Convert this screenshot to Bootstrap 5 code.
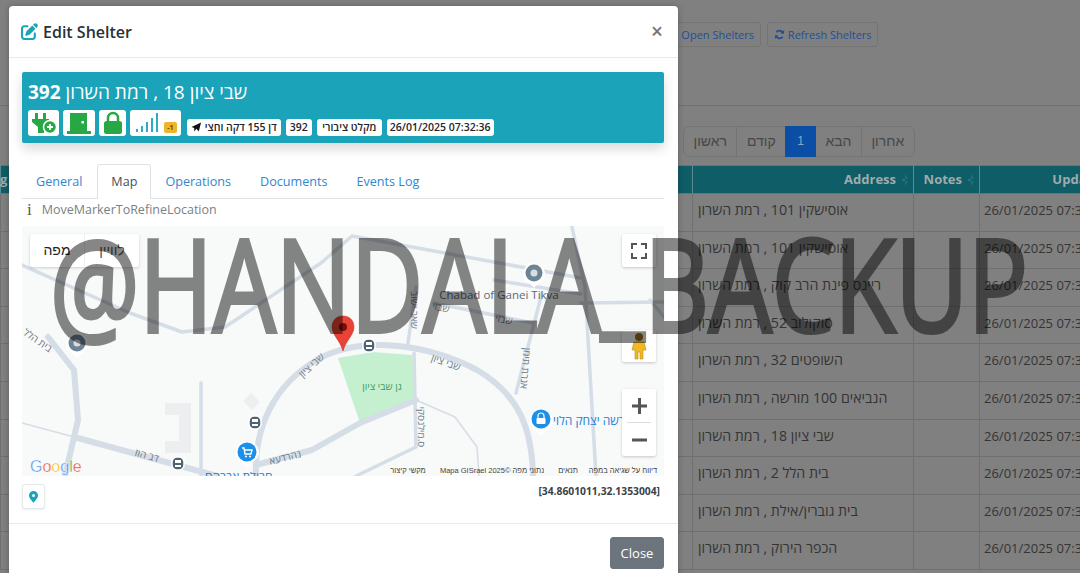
<!DOCTYPE html>
<html lang="en">
<head>
<meta charset="utf-8">
<title>Edit Shelter</title>
<link rel="stylesheet" href="https://cdn.jsdelivr.net/npm/bootstrap@5.3.0/dist/css/bootstrap.min.css">
<style>
html,body{height:573px;overflow:hidden}
body{background:#808080;font-family:"Open Sans","Noto Sans",sans-serif;color:#333;font-size:13px;position:relative;width:1080px}
.tools{padding:22px 0 0 640px;height:106px;border-bottom:1px solid #707070;gap:6px}
.tool-btn{height:25px;border:1px solid #747474;border-radius:3px;color:#1d4f9c;font-size:11px;line-height:23px;padding:0 6px;text-align:right;white-space:nowrap}
.tool-open{width:121px}
.tool-refresh{width:111px}
.tool-btn svg{width:11px;height:11px;vertical-align:-1px}
.pager{margin:20px 0 8px 683px;height:31px}
.pager .page-link{background:transparent;border-color:#747474;color:#474747;font-size:14px;height:31px;line-height:29px;padding:0 9.5px;font-family:"Liberation Sans","Open Sans",sans-serif}
.pager .page-item.active .page-link{background:#0b4ea6;border-color:#0b4ea6;color:#8fa7c8;font-size:12px;padding:0 11px}
.grid-wrap{width:1080px;overflow:hidden}
.sheet-table{table-layout:fixed;width:1151px;margin:0;--bs-table-bg:transparent;--bs-table-color:#343434;--bs-table-border-color:#707070;border-color:#707070}
.sheet-table th{background:#0f5d67;color:#9fabad;height:28px;padding:0 17px 0 0;font-size:13px;line-height:27px;text-align:right;border-color:#5b8a90;font-weight:700;position:relative;font-family:"Open Sans",sans-serif}
.sheet-table th .sortmark{position:absolute;right:5px;top:8px;width:6px;height:12px;background:#1a7580;clip-path:polygon(50% 0,100% 40%,0 40%,0 60%,100% 60%,50% 100%)}
.sheet-table td{height:37.6px;padding:0 5px;line-height:32px;font-size:14.2px;vertical-align:top;white-space:nowrap;overflow:hidden}
.sheet-table td.dt{padding-left:4px;font-size:13px}
.c1{width:692px}.c2{width:221px}.c3{width:66px}.c4{width:172px}
.edge-g{position:absolute;left:0;top:170px;color:#9fabad;font-weight:700;font-size:13px;line-height:18px}

.sheet{position:absolute;left:9px;top:6px;width:669px;height:600px;border:0;border-radius:4px;box-shadow:0 0 6px rgba(0,0,0,.25);background:#fff;z-index:5}
.sheet-head{height:52px;padding:0 13px 0 12px;border-bottom:1px solid #e7e9eb}
.sheet-title{font-size:16px;font-weight:600;color:#2b3035;margin:0;line-height:52px}
.sheet-title svg{width:17px;height:17px;margin-right:5px;vertical-align:-2px}
.x-btn{background:none;border:0;color:#70777d;font-size:21px;line-height:1;padding:0 2px;font-weight:600}
.sheet-body{padding:14px 14px 0 13px}
.hero{background:#1aa3b9;height:71px;border-radius:2px;padding:7px 6px;box-shadow:0 6px 12px rgba(0,0,0,.15);color:#fff}
.hero-title{font-size:19px;line-height:26px;margin:0 0 5px;font-weight:400;white-space:nowrap}
.hero-title b{font-weight:700}
.hero-row{gap:4px;align-items:flex-end;height:26px}
.ico{background:#fff;border-radius:3px;height:26px;display:flex;align-items:center;justify-content:center;flex:none}
.ico svg{display:block}
.i1{width:31px}.i2{width:32px}.i3{width:27px}.i4{width:51px;margin-right:1px;justify-content:flex-start;padding-left:5px;position:relative}
.neg{position:absolute;right:4px;bottom:3px;background:#f0b429;color:#6b4a00;font-size:7px;font-weight:700;line-height:11px;width:13px;text-align:center;border-radius:2px}
.tag{background:#fff;color:#212529;font-size:10.5px;font-weight:600;height:17px;line-height:17px;padding:0 4px;border-radius:3px;white-space:nowrap;margin-left:1px;flex:none}
.tag svg{width:11px;height:10px;vertical-align:-1px}
.tag-wide{padding:0 5.5px}
.tag-date{padding:0 3px}
.tabs-row{margin-top:21px;height:35px;border-bottom:1px solid #dee2e6;flex-wrap:nowrap}
.tabs-row .nav-link{font-size:12.6px;padding:0 14px 0 13px;line-height:34px;color:#2f87d0;height:35px;border-radius:3px 3px 0 0;white-space:nowrap}
.tabs-row .nav-link.active{color:#495057;background:#fff;border-color:#dee2e6 #dee2e6 #fff;padding:0 13px}
.hint{height:27px;line-height:21px;color:#7a7f84;font-size:12.5px;padding-left:5px;white-space:nowrap}
.hint i{font-family:"Liberation Serif",serif;font-style:normal;font-size:17px;color:#555;margin-right:10px;line-height:21px;vertical-align:-1px}
.mapbox{position:relative;height:250px;width:642px;background:#f8f9f9;overflow:hidden}
.mapbox>svg{display:block;width:642px;height:250px}
.m-types{position:absolute;left:8px;top:8px;width:109px;height:33px;background:#fff;box-shadow:0 1px 3px rgba(0,0,0,.18);border-radius:2px;font-family:"Liberation Sans",sans-serif;font-size:14px;color:#222}
.m-types span{flex:1;text-align:center;line-height:33px}
.m-types span+span{color:#555;border-left:1px solid #eee}
.m-ctl{position:absolute;left:600px;width:34px;background:#fff;box-shadow:0 1px 3px rgba(0,0,0,.2);border-radius:2px;display:flex;align-items:center;justify-content:center}
.m-full{top:8px;height:33px}
.m-peg{top:104px;height:32px}
.m-zoom{top:163px;height:67px;flex-direction:column;color:#555}
.m-zoom svg{display:block}
.m-zoom hr{width:24px;margin:0;border-color:#ddd;opacity:1}
.under-map{height:47px;padding-top:8px}
.pin-btn{width:23px;height:25px;border:1px solid #e6e8ea;border-radius:3px;background:#fff;padding:0;display:flex;align-items:center;justify-content:center;box-shadow:0 1px 2px rgba(0,0,0,.08)}
.coords{font-size:10.3px;font-weight:700;color:#3c4248;padding:0 4px 0 0;line-height:14px}
.sheet-foot{border-top:1px solid #e7e9eb;padding:13px 14px 13px 13px;text-align:right}
.close-btn{background:#6c757d;border-color:#6c757d;color:#fff;font-size:13px;height:32px;width:54px;padding:0;line-height:30px;border-radius:3px}
.stamp{position:absolute;left:0;top:0;width:1080px;height:573px;pointer-events:none;z-index:9;opacity:.47}
.stamp text{font-family:"Open Sans",sans-serif;font-size:129px;fill:#000;stroke:#000;stroke-width:4}
.road{fill:none;stroke:#d5dde6;stroke-linecap:round;stroke-linejoin:round}
.mt{font-family:"Open Sans","Liberation Sans",sans-serif;font-size:10px;fill:#6e7a85;text-anchor:middle}
.blue{fill:#1a80d8;font-size:12px;text-anchor:start}
.foot-t{font-family:"Liberation Sans",sans-serif;font-size:7.5px;fill:#444;text-anchor:middle}
</style>
</head>
<body>

<div class="d-flex tools">
  <div class="tool-btn tool-open">Open Shelters</div>
  <div class="tool-btn tool-refresh"><svg viewBox="0 0 24 24" fill="none" stroke="#1d4f9c" stroke-width="4"><path d="M20 10a8.5 8.5 0 0 0-15-3"/><path d="M4 14a8.500 8.500 0 0 0 15 3"/><path d="M22 2v8h-8z" fill="#1d4f9c" stroke="none"/><path d="M2 22v-8h8z" fill="#1d4f9c" stroke="none"/></svg> Refresh Shelters</div>
</div>

<ul class="pagination pager">
  <li class="page-item"><span class="page-link">ראשון</span></li>
  <li class="page-item"><span class="page-link">קודם</span></li>
  <li class="page-item active"><span class="page-link">1</span></li>
  <li class="page-item"><span class="page-link">הבא</span></li>
  <li class="page-item"><span class="page-link">אחרון</span></li>
</ul>

<div class="grid-wrap">
<table class="table table-bordered sheet-table">
  <colgroup><col class="c1"><col class="c2"><col class="c3"><col class="c4"></colgroup>
  <thead><tr><th></th><th>Address<span class="sortmark"></span></th><th>Notes<span class="sortmark"></span></th><th>Update Date</th></tr></thead>
  <tbody>
    <tr><td></td><td>אוסישקין 101 , רמת השרון</td><td></td><td class="dt">26/01/2025 07:32:36</td></tr>
    <tr><td></td><td>אוסישקין 101 , רמת השרון</td><td></td><td class="dt">26/01/2025 07:32:36</td></tr>
    <tr><td></td><td>ריינס פינת הרב קוק , רמת השרון</td><td></td><td class="dt">26/01/2025 07:32:36</td></tr>
    <tr><td></td><td>סוקולוב 52 , רמת השרון</td><td></td><td class="dt">26/01/2025 07:32:36</td></tr>
    <tr><td></td><td>השופטים 32 , רמת השרון</td><td></td><td class="dt">26/01/2025 07:32:36</td></tr>
    <tr><td></td><td>הנביאים 100 מורשה , רמת השרון</td><td></td><td class="dt">26/01/2025 07:32:36</td></tr>
    <tr><td></td><td>שבי ציון 18 , רמת השרון</td><td></td><td class="dt">26/01/2025 07:32:36</td></tr>
    <tr><td></td><td>בית הלל 2 , רמת השרון</td><td></td><td class="dt">26/01/2025 07:32:36</td></tr>
    <tr><td></td><td>בית גוברין/אילת , רמת השרון</td><td></td><td class="dt">26/01/2025 07:32:36</td></tr>
    <tr><td></td><td>הכפר הירוק , רמת השרון</td><td></td><td class="dt">26/01/2025 07:32:36</td></tr>
  </tbody>
</table>
</div>
<span class="edge-g">g</span>

<div class="modal-content sheet">
  <div class="d-flex justify-content-between align-items-center sheet-head">
    <h5 class="sheet-title"><svg viewBox="0 0 512 512" fill="#1aa3b9"><path d="M471.6 21.7c-21.9-21.9-57.3-21.9-79.2 0L362.3 51.7l97.900 97.900 30.100-30.100c21.900-21.900 21.900-57.300 0-79.200L471.600 21.700zm-299.200 220c-6.100 6.100-10.800 13.600-13.500 21.900l-29.600 88.800c-2.900 8.600-.6 18.100 5.800 24.600s15.900 8.700 24.600 5.800l88.800-29.600c8.200-2.700 15.700-7.400 21.900-13.500L437.700 172.300 339.700 74.300 172.400 241.700zM96 64C43 64 0 107 0 160V416c0 53 43 96 96 96H352c53 0 96-43 96-96V320c0-17.700-14.300-32-32-32s-32 14.300-32 32v96c0 17.700-14.300 32-32 32H96c-17.700 0-32-14.300-32-32V160c0-17.700 14.300-32 32-32h96c17.700 0 32-14.300 32-32s-14.300-32-32-32H96z"/></svg>Edit Shelter</h5>
    <button class="x-btn" type="button">×</button>
  </div>
  <div class="sheet-body">
    <div class="hero">
      <h4 class="hero-title"><b>392</b> <bdi>שבי ציון 18 , רמת השרון</bdi></h4>
      <div class="d-flex hero-row">
        <div class="ico i1"><svg width="28" height="24" viewBox="0 0 28 24"><path d="M5 2h3v6H5zM13 2h3v6h-3zM2 8h17v3l-5 5v6H8v-6l-6-5z" fill="#28a745"/><circle cx="20" cy="16" r="6.500" fill="#28a745" stroke="#fff" stroke-width="1.500"/><path d="M17 16h6M20 13v6" stroke="#fff" stroke-width="1.800"/></svg></div>
        <div class="ico i2"><svg width="26" height="24" viewBox="0 0 26 24"><path d="M4 2h17v19H4z" fill="#28a745"/><path d="M1 20h24v3H1z" fill="#28a745"/><rect x="15.500" y="10" width="2.500" height="2.500" fill="#fff"/></svg></div>
        <div class="ico i3"><svg width="20" height="24" viewBox="0 0 20 24"><path d="M5 11V7a5 5 0 0 1 10 0v4" fill="none" stroke="#28a745" stroke-width="2.500"/><rect x="1" y="10" width="18" height="13" rx="2.500" fill="#28a745"/></svg></div>
        <div class="ico i4"><svg width="26" height="22" viewBox="0 0 26 22"><path d="M2 20v-3M7 20v-6M12 20V10M17 20V6M22 20V1" stroke="#1aa3b9" stroke-width="1.800"/></svg><span class="neg">-1</span></div>
        <span class="tag"><svg viewBox="0 0 24 22"><path d="M1 11 22 1 17 21l-5-6-5 6v-8z" fill="#111"/></svg> <bdi>דן 155 דקה וחצי</bdi></span>
        <span class="tag">392</span>
        <span class="tag tag-wide"><bdi>מקלט ציבורי</bdi></span>
        <span class="tag tag-date">26/01/2025 07:32:36</span>
      </div>
    </div>

    <ul class="nav nav-tabs tabs-row">
      <li class="nav-item"><a class="nav-link" href="#">General</a></li>
      <li class="nav-item"><a class="nav-link active" href="#">Map</a></li>
      <li class="nav-item"><a class="nav-link" href="#">Operations</a></li>
      <li class="nav-item"><a class="nav-link" href="#">Documents</a></li>
      <li class="nav-item"><a class="nav-link" href="#">Events Log</a></li>
    </ul>
    <div class="hint"><i>i</i>MoveMarkerToRefineLocation</div>

    <div class="mapbox">
      <svg viewBox="22 226 642 250">
        <rect x="22" y="226" width="642" height="250" fill="#f8f9f9"/>
        <path d="M165 403h26v50h-26v-12h14v-26h-14z" fill="#eceeef"/>
        <path d="M251 393l9 9-8 8-9-9z" fill="#eceeef"/>
        <path d="M338 358 373 352 412 355 416 400 390 408 360 423z" fill="#c5f0d0"/>
        <g class="road" stroke-width="3.500">
          <path d="M22 265 130 313 182 332 225 327 321 263 352 236 581 278"/>
          <path d="M572 227 585 287 596 476"/>
          <path d="M581 303 664 302"/>
          <path d="M650 300 664 317"/>
          <path d="M494 280 581 294"/>
          <path d="M434 303 533 323"/>
          <path d="M542 293 516 393"/>
          <path d="M408 343 416 287"/>
          <path d="M414 353 416 447 356 476"/>
          <path d="M201 383V476"/>
        </g>
        <g class="road" stroke-width="1.500">
          <path d="M416 400 455 417 477 447 479 476"/>
          <path d="M22 423 74 437"/>
        </g>
        <g class="road" stroke-width="6">
          <path d="M48 337 74 370 78 420 65 476"/>
          <path d="M74 437 195 470 217 476"/>
          <path d="M256 476C254 430 272 385 320 358 365 335 430 345 477 370 520 395 532 430 533 476"/>
          <path d="M256 465 312 450 360 423 416 400"/>
        </g>
        <g class="mt">
          <text x="38" y="344" transform="rotate(35 38 340)">בית הלל</text>
          <text x="311" y="369" transform="rotate(-42 311 365)">שבי ציון</text>
          <text x="446" y="366" transform="rotate(20 446 362)">שבי ציון</text>
          <text x="382" y="390" fill="#3d9a62">גן שבי ציון</text>
          <text x="147" y="459" transform="rotate(16 147 455)">דב הוז</text>
          <text x="285" y="461" transform="rotate(-14 285 457)">נהרדעא</text>
          <text x="411" y="310" transform="rotate(90 411 310)">שאר ישוב</text>
          <text x="522" y="368" transform="rotate(95 522 368)">אגרת תימן</text>
          <text x="418" y="427" transform="rotate(90 418 427)">ס.מילנסקי</text>
          <text x="441" y="311" transform="rotate(12 441 307)">שבזי</text>
          <text x="504" y="323" transform="rotate(12 504 319)">שבזי</text>
          <text x="499" y="299" font-size="11.500" fill="#5d6a75">Chabad of Ganei Tikva</text>
          <text class="blue" x="553" y="425">מורשה יצחק הלוי</text>
          <text class="blue" x="205" y="481">חרולת אברהם</text>
        </g>
        <g>
          <path d="M77 333a11 11 0 0 1 11 11c0 7-7 9-11 14-4-5-11-7-11-14a11 11 0 0 1 11-11z" fill="#fff"/>
          <circle cx="77" cy="343" r="8.500" fill="#6d8494"/><circle cx="77" cy="343" r="3.500" fill="#d6dde3"/>
          <path d="M534 263a11 11 0 0 1 11 11c0 7-7 9-11 14-4-5-11-7-11-14a11 11 0 0 1 11-11z" fill="#fff"/>
          <circle cx="534" cy="273" r="8.500" fill="#6d8494"/><circle cx="534" cy="273" r="3.500" fill="#d6dde3"/>
          <g fill="#4f6272" stroke="#fff" stroke-width="1.500"><rect x="363" y="339" width="12" height="13" rx="5"/><rect x="249" y="416" width="12" height="13" rx="5"/><rect x="172" y="457" width="12" height="13" rx="5"/></g>
          <g fill="#fff"><rect x="366" y="342" width="6" height="3"/><rect x="366" y="347" width="6" height="2"/><rect x="252" y="419" width="6" height="3"/><rect x="252" y="424" width="6" height="2"/><rect x="175" y="460" width="6" height="3"/><rect x="175" y="465" width="6" height="2"/></g>
          <path d="M247 441a12 12 0 0 1 12 12c0 7-8 9-12 15-4-6-12-8-12-15a12 12 0 0 1 12-12z" fill="#fff"/>
          <circle cx="247" cy="452" r="9.500" fill="#1c8fe8"/>
          <path d="M242 448h2l1 6h6l1-4h-7" fill="none" stroke="#fff" stroke-width="1.400"/><circle cx="246" cy="456.500" r="1" fill="#fff"/><circle cx="250" cy="456.500" r="1" fill="#fff"/>
          <path d="M541 409a12 12 0 0 1 12 12c0 7-8 9-12 15-4-6-12-8-12-15a12 12 0 0 1 12-12z" fill="#fff"/>
          <circle cx="541" cy="419" r="9.500" fill="#1c8fe8"/>
          <path d="M538 418v-2a3 3 0 0 1 6 0v2" fill="none" stroke="#fff" stroke-width="1.200"/><rect x="536.500" y="418" width="9" height="6" rx="1" fill="#fff"/>
          <path d="M343 316c6.500 0 11 4.500 11 11 0 8-8 13-11 24-3-11-11-16-11-24 0-6.500 4.500-11 11-11z" fill="#ea4335" stroke="#c5221f" stroke-width=".5"/>
          <circle cx="343" cy="327" r="4" fill="#7a0f0a"/>
          <text x="30" y="472" font-family="Liberation Sans, sans-serif" font-size="16" stroke="#fff" stroke-width=".4"><tspan fill="#4285f4">G</tspan><tspan fill="#ea4335">o</tspan><tspan fill="#fbbc05">o</tspan><tspan fill="#4285f4">g</tspan><tspan fill="#34a853">l</tspan><tspan fill="#ea4335">e</tspan></text>
        </g>
        <g class="foot-t">
          <text x="408" y="473">מקשי קיצור</text>
          <text x="492" y="473">Mapa GISrael נתוני מפה ©2025</text>
          <text x="568" y="473">תנאים</text>
          <text x="623" y="473">דיווח על שגיאה במפה</text>
        </g>
      </svg>
      <div class="m-types d-flex"><span>מפה</span><span>לוויין</span></div>
      <div class="m-ctl m-full"><svg width="16" height="16" viewBox="0 0 16 16" fill="none" stroke="#555" stroke-width="2"><path d="M1 6V1h5M10 1h5v5M15 10v5h-5M6 15H1v-5"/></svg></div>
      <div class="m-ctl m-peg"><svg width="16" height="28" viewBox="0 0 16 28"><circle cx="8" cy="5" r="4" fill="#9a7212"/><path d="M3 10h10l2 8h-3v9h-3v-7H7v7H4v-9H1z" fill="#f2b824" stroke="#b98a12" stroke-width=".6"/></svg></div>
      <div class="m-ctl m-zoom">
        <svg width="34" height="33" viewBox="0 0 34 33"><path d="M10 17h15M17.500 9v16" stroke="#555" stroke-width="3"/></svg>
        <hr>
        <svg width="34" height="33" viewBox="0 0 34 33"><path d="M10 17h15" stroke="#555" stroke-width="3"/></svg>
      </div>
    </div>

    <div class="d-flex justify-content-between under-map">
      <button class="pin-btn" type="button"><svg width="9" height="12" viewBox="0 0 18 24"><path d="M9 0a9 9 0 0 1 9 9c0 6-6 10-9 15C6 19 0 15 0 9a9 9 0 0 1 9-9zm0 6a3 3 0 1 0 0 6 3 3 0 0 0 0-6z" fill="#1aa3b9" fill-rule="evenodd"/></svg></button>
      <div class="coords">[34.8601011,32.1353004]</div>
    </div>
  </div>
  <div class="sheet-foot">
    <button class="btn close-btn" type="button">Close</button>
  </div>
</div>

<svg class="stamp" viewBox="0 0 1080 573"><text x="50" y="332" textLength="978" lengthAdjust="spacingAndGlyphs">@HANDALA<tspan dy="-10">_</tspan><tspan dy="10">BACKUP</tspan></text></svg>

<script src="https://cdn.jsdelivr.net/npm/bootstrap@5.3.0/dist/js/bootstrap.bundle.min.js"></script>
</body>
</html>
